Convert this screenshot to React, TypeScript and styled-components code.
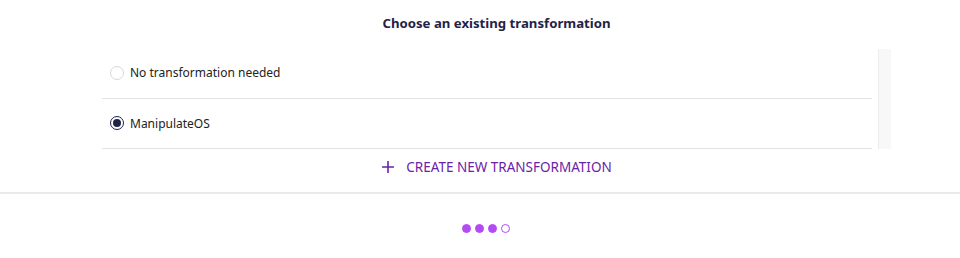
import React, { useState } from "react";
import styled, { createGlobalStyle } from "styled-components";

const Global = createGlobalStyle`
  html, body { margin: 0; padding: 0; background: #fff; }
  body { font-family: "Noto Sans", "Open Sans", sans-serif; }
`;

const Page = styled.div`
  width: 960px;
  height: 258px;
  display: flex;
  flex-direction: column;
`;

const Content = styled.div`
  margin-left: 102px;
  width: 789px;
  display: flex;
  flex-direction: column;
`;

const Title = styled.h2`
  margin: 0;
  padding-top: 13px;
  height: 48px;
  box-sizing: border-box;
  text-align: center;
  font-size: 13.2px;
  line-height: 20px;
  font-weight: 700;
  color: #1f2347;
`;

const ListWrap = styled.div`
  display: flex;
  gap: 6px;
  height: 101px;
`;

const List = styled.div`
  flex: 1;
  display: flex;
  flex-direction: column;
`;

const Track = styled.div`
  width: 12px;
  background: #f8f8f8;
  border-left: 1px solid #ececec;
  margin-top: 1px;
`;

const Row = styled.label`
  height: 50px;
  display: flex;
  align-items: center;
  gap: 6px;
  padding-left: 8px;
  border-bottom: 1px solid #e2e2e2;
  font-size: 12px;
  color: #222;
  cursor: pointer;
`;

const Radio = styled.span<{ $checked: boolean }>`
  width: 14px;
  height: 14px;
  box-sizing: border-box;
  border-radius: 50%;
  border: 1px solid ${(p) => (p.$checked ? "#1f2347" : "#d8d8d8")};
  display: flex;
  align-items: center;
  justify-content: center;
  &::after {
    content: "";
    width: 8px;
    height: 8px;
    border-radius: 50%;
    background: ${(p) => (p.$checked ? "#1f2347" : "transparent")};
  }
`;

const CreateButton = styled.button`
  align-self: center;
  margin-top: 3px;
  height: 30px;
  display: flex;
  align-items: center;
  gap: 11px;
  border: none;
  background: none;
  font-family: inherit;
  font-size: 13.5px;
  font-weight: 400;
  color: #6b22a8;
  cursor: pointer;
  padding: 0;
`;

const Divider = styled.div`
  margin-top: 10px;
  height: 2px;
  background: #e9e9e9;
`;

const Dots = styled.div`
  display: flex;
  justify-content: center;
  gap: 4px;
  margin-top: 30px;
  padding-left: 12px;
`;

const Dot = styled.span<{ $filled: boolean }>`
  width: 9px;
  height: 9px;
  box-sizing: border-box;
  border-radius: 50%;
  border: 1.5px solid #b44af5;
  background: ${(p) => (p.$filled ? "#b44af5" : "#fff")};
`;

export default function App() {
  const [sel, setSel] = useState(1);
  const options = ["No transformation needed", "ManipulateOS"];
  return (
    <Page>
      <Global />
      <Content>
        <Title>Choose an existing transformation</Title>
        <ListWrap>
          <List>
            {options.map((o, i) => (
              <Row key={o} onClick={() => setSel(i)}>
                <Radio $checked={sel === i} />
                {o}
              </Row>
            ))}
          </List>
          <Track />
        </ListWrap>
        <CreateButton>
          <svg width="14" height="14" viewBox="0 0 14 14">
            <path d="M7 1v12M1 7h12" stroke="#6b22a8" strokeWidth="1.6" />
          </svg>
          CREATE NEW TRANSFORMATION
        </CreateButton>
      </Content>
      <Divider />
      <Dots>
        {[0, 1, 2, 3].map((i) => (
          <Dot key={i} $filled={i < 3} />
        ))}
      </Dots>
    </Page>
  );
}
